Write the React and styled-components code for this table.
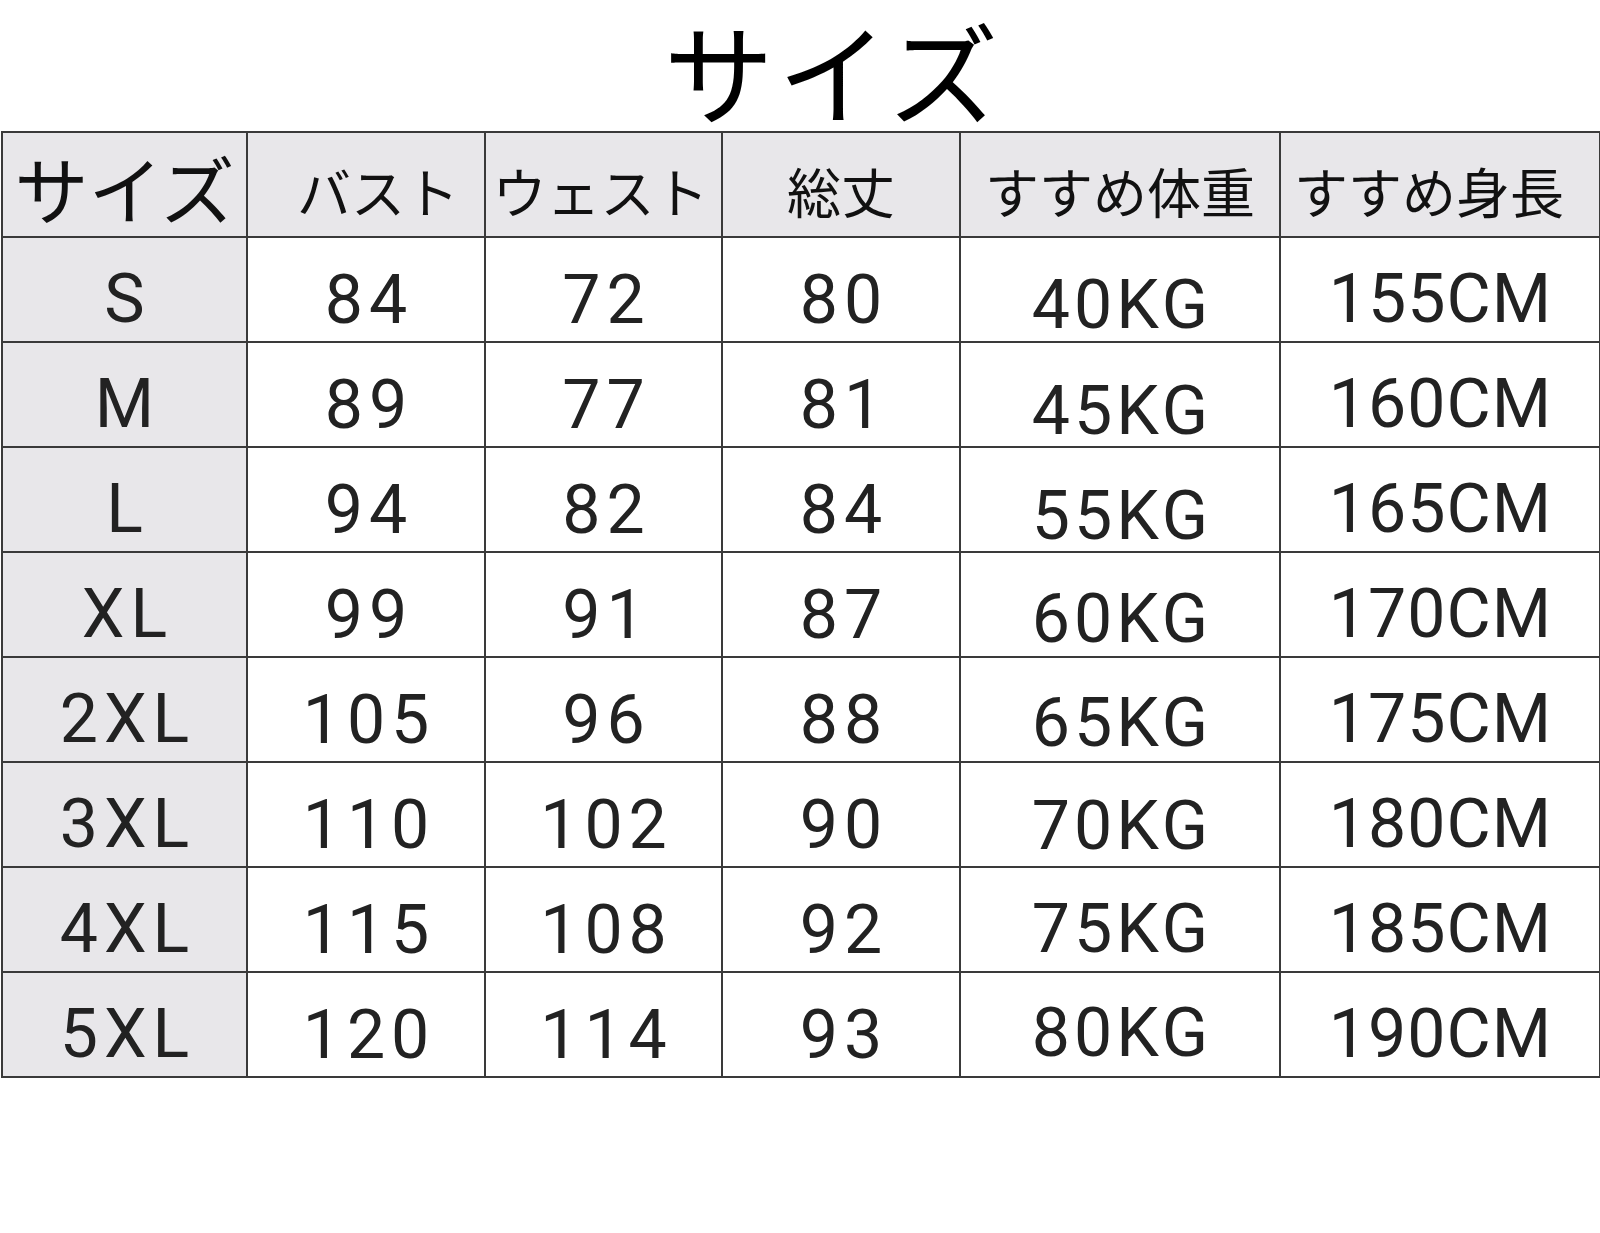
import * as React from "react";
import styled, { createGlobalStyle } from "styled-components";

const rows = [
  ["S", "84", "72", "80", "40KG", "155CM"],
  ["M", "89", "77", "81", "45KG", "160CM"],
  ["L", "94", "82", "84", "55KG", "165CM"],
  ["XL", "99", "91", "87", "60KG", "170CM"],
  ["2XL", "105", "96", "88", "65KG", "175CM"],
  ["3XL", "110", "102", "90", "70KG", "180CM"],
  ["4XL", "115", "108", "92", "75KG", "185CM"],
  ["5XL", "120", "114", "93", "80KG", "190CM"],
];

const headers = [
  { text: "バスト", shift: 24 },
  { text: "ウェスト", shift: -6 },
  { text: "総丈", shift: 0 },
  { text: "すすめ体重", shift: 0 },
  { text: "すすめ身長", shift: -22 },
];
const widths = [245, 238, 237, 238, 320, 320];
// the numbers sit a little low in their cells; the weight column drifts upward row by row
const offsets = [19, 20, 20, 20, 30, 19];
const weightOffsets = [30, 33, 32, 29, 26, 23, 19, 16];
const spacing = [6, 6, 6, 6, 4, 1];

const GlobalStyle = createGlobalStyle`
  body {
    margin: 0;
    background: #ffffff;
  }
`;

const Page = styled.div`
  width: 1600px;
  height: 1233px;
  background: #ffffff;
  font-family: "Noto Sans CJK JP", "Noto Sans", sans-serif;
  color: #1c1c1c;
`;

const Title = styled.h1`
  margin: 0;
  height: 131px;
  box-sizing: border-box;
  padding: 14px 0 0 66px;
  text-align: center;
  font-size: 110px;
  line-height: 110px;
  letter-spacing: 4px;
  font-weight: 400;
  color: #000;
`;

const Table = styled.table`
  margin-left: 1px;
  border-collapse: collapse;
  table-layout: fixed;
  width: 1598px;
`;

const HeadCell = styled.th`
  height: 105px;
  padding: ${(p) => (p.$first ? "4px 0 0" : "12px 0 0")};
  padding-left: ${(p) => Math.max(p.$shift || 0, 0)}px;
  padding-right: ${(p) => Math.max(-(p.$shift || 0), 0)}px;
  box-sizing: border-box;
  border: 2px solid #3a3a3a;
  background: #e8e7ea;
  font-size: ${(p) => (p.$first ? "74px" : "54px")};
  font-weight: 400;
  line-height: 1;
  white-space: nowrap;
  text-align: center;
  color: #111;
`;

const Cell = styled.td`
  height: 105px;
  padding: ${(p) => p.$offset}px 0 0;
  box-sizing: border-box;
  border: 2px solid #3a3a3a;
  background: ${(p) => (p.$label ? "#e8e7ea" : "#ffffff")};
  font-family: Roboto, "Liberation Sans", sans-serif;
  font-size: 68px;
  line-height: 1;
  letter-spacing: ${(p) => p.$spacing}px;
  text-indent: ${(p) => p.$spacing}px;
  white-space: nowrap;
  text-align: center;
  color: #222;
`;

export default function App() {
  return (
    <Page>
      <GlobalStyle />
      <Title>サイズ</Title>
      <Table>
        <colgroup>
          {widths.map((w, i) => (
            <col key={i} style={{ width: w }} />
          ))}
        </colgroup>
        <thead>
          <tr>
            <HeadCell $first>サイズ</HeadCell>
            {headers.map((h) => (
              <HeadCell key={h.text} $shift={h.shift}>
                {h.text}
              </HeadCell>
            ))}
          </tr>
        </thead>
        <tbody>
          {rows.map((row, r) => (
            <tr key={row[0]}>
              {row.map((v, i) => (
                <Cell
                  key={i}
                  $label={i === 0}
                  $spacing={spacing[i]}
                  $offset={i === 4 ? weightOffsets[r] : offsets[i]}
                >
                  {v}
                </Cell>
              ))}
            </tr>
          ))}
        </tbody>
      </Table>
    </Page>
  );
}
